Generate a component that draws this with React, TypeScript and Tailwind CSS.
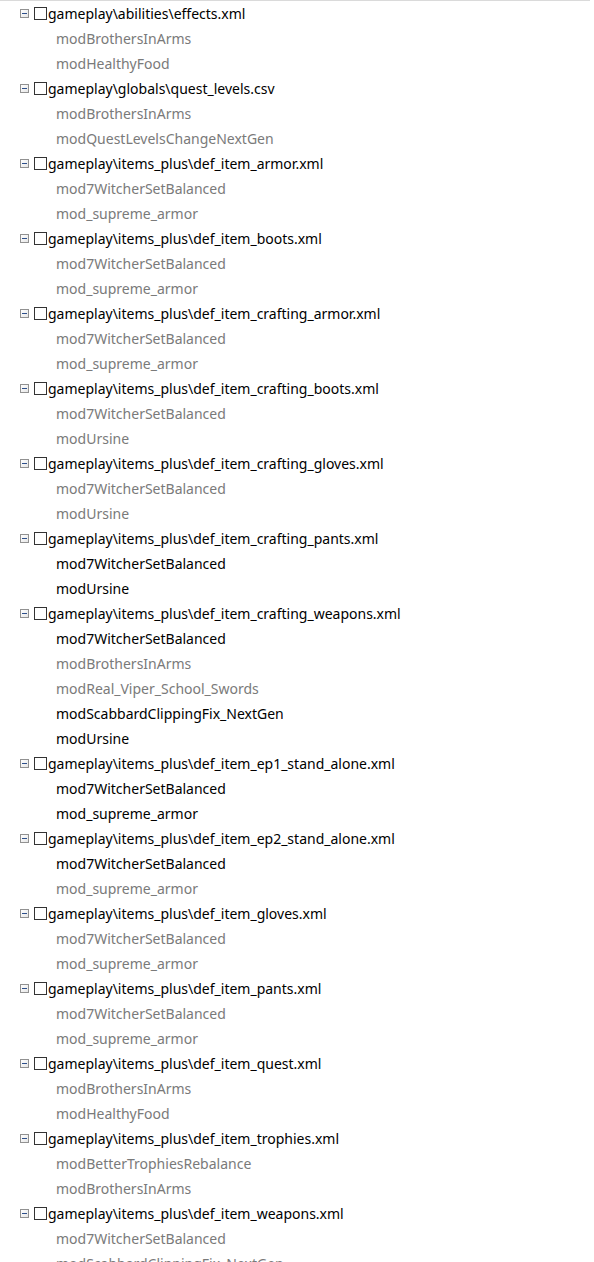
import React from "react";

type Child = { name: string; dark?: boolean };
type Group = { path: string; children: Child[] };

const GROUPS: Group[] = [
  { path: "gameplay\\abilities\\effects.xml", children: [{ name: "modBrothersInArms" }, { name: "modHealthyFood" }] },
  { path: "gameplay\\globals\\quest_levels.csv", children: [{ name: "modBrothersInArms" }, { name: "modQuestLevelsChangeNextGen" }] },
  { path: "gameplay\\items_plus\\def_item_armor.xml", children: [{ name: "mod7WitcherSetBalanced" }, { name: "mod_supreme_armor" }] },
  { path: "gameplay\\items_plus\\def_item_boots.xml", children: [{ name: "mod7WitcherSetBalanced" }, { name: "mod_supreme_armor" }] },
  { path: "gameplay\\items_plus\\def_item_crafting_armor.xml", children: [{ name: "mod7WitcherSetBalanced" }, { name: "mod_supreme_armor" }] },
  { path: "gameplay\\items_plus\\def_item_crafting_boots.xml", children: [{ name: "mod7WitcherSetBalanced" }, { name: "modUrsine" }] },
  { path: "gameplay\\items_plus\\def_item_crafting_gloves.xml", children: [{ name: "mod7WitcherSetBalanced" }, { name: "modUrsine" }] },
  { path: "gameplay\\items_plus\\def_item_crafting_pants.xml", children: [{ name: "mod7WitcherSetBalanced", dark: true }, { name: "modUrsine", dark: true }] },
  {
    path: "gameplay\\items_plus\\def_item_crafting_weapons.xml",
    children: [
      { name: "mod7WitcherSetBalanced", dark: true },
      { name: "modBrothersInArms" },
      { name: "modReal_Viper_School_Swords" },
      { name: "modScabbardClippingFix_NextGen", dark: true },
      { name: "modUrsine", dark: true },
    ],
  },
  { path: "gameplay\\items_plus\\def_item_ep1_stand_alone.xml", children: [{ name: "mod7WitcherSetBalanced", dark: true }, { name: "mod_supreme_armor", dark: true }] },
  { path: "gameplay\\items_plus\\def_item_ep2_stand_alone.xml", children: [{ name: "mod7WitcherSetBalanced", dark: true }, { name: "mod_supreme_armor" }] },
  { path: "gameplay\\items_plus\\def_item_gloves.xml", children: [{ name: "mod7WitcherSetBalanced" }, { name: "mod_supreme_armor" }] },
  { path: "gameplay\\items_plus\\def_item_pants.xml", children: [{ name: "mod7WitcherSetBalanced" }, { name: "mod_supreme_armor" }] },
  { path: "gameplay\\items_plus\\def_item_quest.xml", children: [{ name: "modBrothersInArms" }, { name: "modHealthyFood" }] },
  { path: "gameplay\\items_plus\\def_item_trophies.xml", children: [{ name: "modBetterTrophiesRebalance" }, { name: "modBrothersInArms" }] },
  { path: "gameplay\\items_plus\\def_item_weapons.xml", children: [{ name: "mod7WitcherSetBalanced" }, { name: "modScabbardClippingFix_NextGen" }] },
];

function Expander() {
  return (
    <span className="flex h-[9px] w-[9px] items-center justify-center border border-[#919191] bg-gradient-to-br from-white to-[#e6e6e6]">
      <span className="h-px w-[5px] bg-[#2d4f8a]" />
    </span>
  );
}

export default function App() {
  return (
    <div className="h-[1262px] w-[594px] overflow-hidden bg-white font-['Noto_Sans',sans-serif] text-[14px]">
      <div className="mr-[4px] h-px bg-[#dadada]" />
      {GROUPS.map((g) => (
        <div key={g.path}>
          <div className="flex h-[25px] items-center">
            <span className="ml-[20px] mr-[5px]">
              <Expander />
            </span>
            <span className="h-[13px] w-[13px] border border-[#333]" />
            <span className="ml-px whitespace-nowrap text-black">{g.path}</span>
          </div>
          {g.children.map((c, i) => (
            <div
              key={i}
              className={`flex h-[25px] items-center whitespace-nowrap pl-[56px] ${c.dark ? "text-black" : "text-[#7a7a7a]"}`}
            >
              {c.name}
            </div>
          ))}
        </div>
      ))}
    </div>
  );
}
